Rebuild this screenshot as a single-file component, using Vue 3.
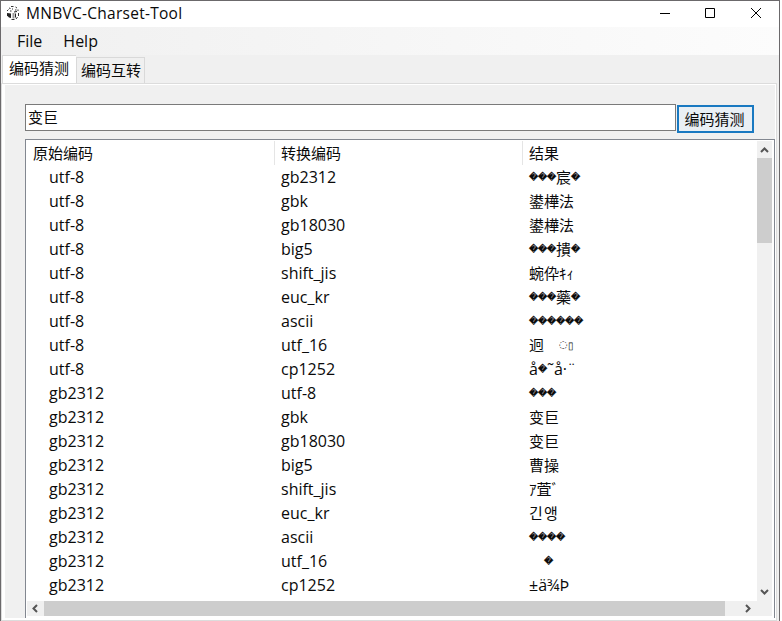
<script setup>
const blank = '\u3000'
const bad = '\uFFFD'
const rows = [
  ['utf-8', 'gb2312', bad.repeat(3) + '宸' + bad],
  ['utf-8', 'gbk', '鍙樺法'],
  ['utf-8', 'gb18030', '鍙樺法'],
  ['utf-8', 'big5', bad.repeat(3) + '撌' + bad],
  ['utf-8', 'shift_jis', '蜿伜ｷｨ'],
  ['utf-8', 'euc_kr', bad.repeat(3) + '藥' + bad],
  ['utf-8', 'ascii', bad.repeat(6)],
  ['utf-8', 'utf_16', '迥' + blank + '◌▯'],
  ['utf-8', 'cp1252', 'å' + bad + '˜å·¨'],
  ['gb2312', 'utf-8', bad.repeat(3)],
  ['gb2312', 'gbk', '变巨'],
  ['gb2312', 'gb18030', '变巨'],
  ['gb2312', 'big5', '曹操'],
  ['gb2312', 'shift_jis', 'ｱ萓ﾞ'],
  ['gb2312', 'euc_kr', '긴앵'],
  ['gb2312', 'ascii', bad.repeat(4)],
  ['gb2312', 'utf_16', blank + bad],
  ['gb2312', 'cp1252', '±ä¾Þ'],
]
const kindOf = (ch) => {
  if (ch === bad) return 'bad'
  if (ch === '▯') return 'box'
  if (ch === '◌') return 'dotted'
  if (/[\uFF61-\uFF9F]/.test(ch)) return 'half'
  if (/[\u3000-\u9FFF\uAC00-\uD7A3]/.test(ch)) return 'wide'
  return 'latin'
}
const split = (text) => Array.from(text).map((ch) => ({ ch, kind: kindOf(ch) }))
</script>

<template>
  <div class="window">
    <header class="titlebar">
      <svg class="logo" width="14" height="16" viewBox="0 0 14 16">
        <path d="M1 6l1.500-1.500M3 3l1.500.5M5 1.500h2.500M9.500 2l1.500 1M12 4.500v1.500M6 4h1M9 5h1.500M4 6h1.500" stroke="#333" fill="none" />
        <path d="M1 8l4 .5V13l-2-.5-2-2z" fill="#222" />
        <path d="M6.500 8h2v5.500h-2z" fill="#999" />
        <path d="M12.500 8v3M11.500 12L10 14M8.500 14.500H5.500" stroke="#333" fill="none" />
        <path d="M9.500 8.500v4M8 7l3-.5" stroke="#222" fill="none" />
      </svg>
      <span class="title">MNBVC-Charset-Tool</span>
      <svg class="controls" width="110" height="20" viewBox="0 0 110 20" fill="none" stroke="#000">
        <path d="M4 10.500h10M49.500 5.500h9v9h-9zM95 5l10 10M105 5l-10 10" />
      </svg>
    </header>
    <nav class="menu"><span class="file">File</span><span>Help</span></nav>
    <div class="tabs"><div class="tab on">编码猜测</div><div class="tab">编码互转</div></div>
    <main class="page">
      <div class="panel">
        <div class="form"><div class="entry">变巨</div><button>编码猜测</button></div>
        <div class="tree">
          <div class="body">
            <div class="table">
              <div class="row head"><span>原始编码</span><span>转换编码</span><span>结果</span></div>
              <div v-for="(r, i) in rows" :key="i" class="row">
                <span class="src">{{ r[0] }}</span><span>{{ r[1] }}</span>
                <span class="result"><span v-for="(c, j) in split(r[2])" :key="j" :class="['g', c.kind]">{{ c.ch }}</span></span>
              </div>
            </div>
            <div class="vbar">
              <svg width="15" height="17" viewBox="0 0 15 17"><path d="M4 11l3.500-3.500L11 11" /></svg>
              <div class="vthumb"></div>
              <svg width="15" height="17" viewBox="0 0 15 17"><path d="M4 6l3.500 3.500L11 6" /></svg>
            </div>
          </div>
          <div class="hbar">
            <svg width="17" height="15" viewBox="0 0 17 15"><path d="M10 4L6.500 7.500l3.500 3.500" /></svg>
            <div class="hthumb"></div>
            <svg width="17" height="15" viewBox="0 0 17 15"><path d="M7 4l3.500 3.500L7 11" /></svg>
          </div>
        </div>
      </div>
    </main>
  </div>
</template>

<style>
body { margin: 0; background: #fff; overflow: hidden; }
</style>
<style scoped>
* { box-sizing: border-box; }
.window { width: 780px; height: 621px; border: 1px solid #6b696b; border-bottom: 0; background: #f0f0f0; display: flex; flex-direction: column; overflow: hidden; font: 16px/24px "Open Sans", "Noto Sans", "Noto Sans CJK SC", sans-serif; color: #0a0a0a; white-space: nowrap; }
.titlebar { height: 26px; flex: none; background: #fff; display: flex; align-items: center; padding: 0 0 2px 5px; }
.title { margin-left: 6px; font-size: 15.500px; letter-spacing: 0.27px; }
.controls { margin-left: auto; margin-right: 13px; }
.menu { height: 28px; flex: none; background: linear-gradient(90deg, #f0f0f0, #fcfcfc); display: flex; gap: 21px; padding: 2px 16px; }
.tabs { height: 28px; flex: none; display: flex; align-items: flex-end; padding-left: 1px; }
.tab { width: 69px; height: 26px; border: 1px solid #d9d9d9; border-bottom: 0; background: #f0f0f0; padding-left: 4px; font-size: 15px; }
.tab.on { width: 74px; height: 28px; background: #fff; border-right: 0; padding-left: 6px; }
.page { flex: none; height: 538px; margin-right: 2px; border: 1px solid #dcdcdc; background: #fff; padding: 1px 1px 2px 3px; }
.panel { background: #f0f0f0; height: 533px; padding: 19px 0 0 20px; }
.form { display: flex; gap: 1px; height: 29px; }
.entry { width: 651px; height: 27px; border: 1px solid #7a7a7a; background: #fff; padding-left: 2px; font-size: 15px; }
button { width: 77px; height: 28px; border: 2px solid #1979c1; background: #e9eff4; padding: 0 2px 0 0; font: inherit; font-size: 15px; line-height: 24px; margin-top: 1px; color: #0a0a0a; }
.tree { margin-top: 6px; width: 750px; height: 479px; border: 1px solid #828790; border-bottom: 0; background: #fff; padding: 1px; }
.body { display: flex; height: 460px; }
.table { width: 730px; }
.row { display: grid; grid-template-columns: 248px 248px 1fr; height: 24px; }
.row > span { padding-left: 6px; }
.row > .src { padding-left: 22px; }
.head { font-size: 15px; }
.head > span { border-right: 1px solid #e5e5e5; }
.head > span:last-child { border: 0; }
.result { display: flex; }
.g { display: inline-block; height: 24px; font-size: 15px; }
.bad { width: 9px; font: 9px/24px "DejaVu Sans", sans-serif; -webkit-text-stroke: 0.3px #0a0a0a; }
.wide { width: 15px; }
.half { width: 7.500px; }
.latin { font-size: 16px; }
.box { font-size: 10px; }
.dotted { font: 10px/24px "DejaVu Sans", sans-serif; }
.vbar { width: 15px; background: #f0f0f0; display: flex; flex-direction: column; }
.vthumb { height: 85px; background: #cdcdcd; margin-bottom: auto; }
.hbar { width: 745px; height: 15px; background: #f0f0f0; display: flex; padding-right: 16px; }
.hthumb { width: 681px; background: #cdcdcd; margin-right: auto; }
.vbar path, .hbar path { fill: none; stroke: #555; stroke-width: 2; }
</style>
